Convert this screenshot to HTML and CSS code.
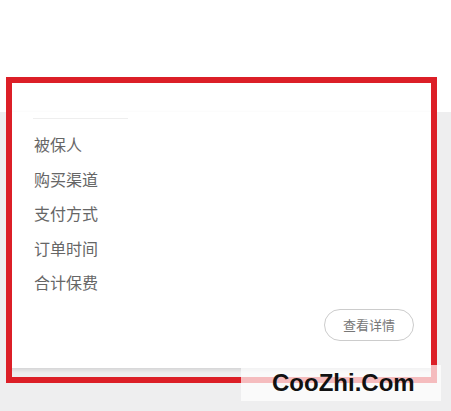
FILE: index.html
```html
<!DOCTYPE html>
<html lang="zh-CN">
<head>
<meta charset="utf-8">
<title>保单</title>
<link rel="stylesheet" href="styles.css">
</head>
<body>
<div class="top"></div>
<div class="card">
  <div class="sep"></div>
  <ul class="rows">
    <li>被保人</li>
    <li>购买渠道</li>
    <li>支付方式</li>
    <li>订单时间</li>
    <li>合计保费</li>
  </ul>
  <div class="actions">
    <button class="detail">查看详情</button>
  </div>
</div>
<div class="mark"></div>
<div class="watermark">CooZhi.Com</div>
</body>
</html>
```
FILE: styles.css
```css
html, body {
  margin: 0;
  padding: 0;
}
body {
  background: #eeeeef;
  font-family: "Noto Sans CJK SC", "Noto Sans", sans-serif;
  width: 451px;
  height: 411px;
  overflow: hidden;
  position: relative;
}
.top {
  height: 112px;
  background: #ffffff;
}
.card {
  margin: 0 18px 0 10px;
  background: #ffffff;
  padding: 6px 0 27px 0;
  box-shadow: 0 2px 4px rgba(0, 0, 0, 0.12);
}
.sep {
  margin-left: 23px;
  width: 95px;
  height: 1px;
  background: #eeeeee;
}
.rows {
  list-style: none;
  margin: 0;
  padding: 8px 0 0 24px;
}
.rows li {
  font-size: 16px;
  line-height: 34.5px;
  color: #666666;
}
.actions {
  display: flex;
  justify-content: flex-end;
  padding-right: 19px;
  margin-top: 9px;
}
.detail {
  width: 90px;
  height: 32px;
  border: 1px solid #cccccc;
  border-radius: 16px;
  background: #ffffff;
  color: #777777;
  font-family: "Noto Sans CJK SC", "Noto Sans", sans-serif;
  font-size: 13px;
  padding: 0;
}
.mark {
  position: absolute;
  left: 6px;
  top: 77px;
  width: 431px;
  height: 306px;
  border: 6px solid #dc1f27;
  box-sizing: border-box;
}
.watermark {
  position: absolute;
  left: 241px;
  top: 365px;
  width: 169px;
  height: 36px;
  padding-left: 31px;
  background: rgba(255, 255, 255, 0.7);
  font-family: "Liberation Sans", Arial, sans-serif;
  font-weight: bold;
  font-size: 24px;
  line-height: 36px;
  color: #111111;
}
```
